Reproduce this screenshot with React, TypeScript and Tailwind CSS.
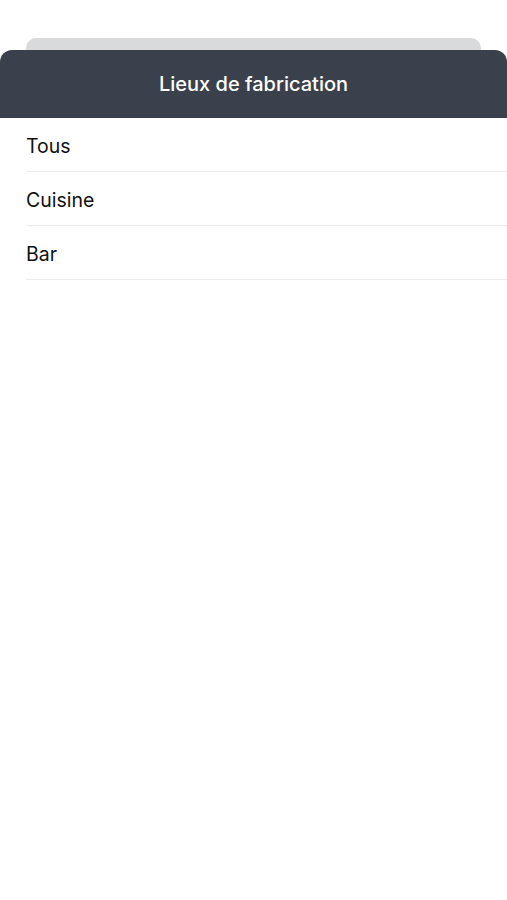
import React from 'react';

const PLACES = ['Tous', 'Cuisine', 'Bar'];

const App: React.FC = () => {
  return (
    <div className="min-h-screen bg-white pt-[38px]" style={{ fontFamily: 'Inter, "Noto Sans", sans-serif' }}>
      {/* stacked card behind the sheet */}
      <div className="mx-[26px] h-[12px] rounded-t-[10px] bg-[#d9dadb]" />

      <div className="flex h-[68px] items-center justify-center rounded-t-[12px] bg-[#3b414c]">
        <h1 className="text-[20px] font-medium text-white">Lieux de fabrication</h1>
      </div>

      <ul className="pl-[26px]">
        {PLACES.map((p) => (
          <li key={p} className="flex h-[54px] items-center border-b border-[#ebebeb] pt-[5px] text-[19.5px] text-[#111]">
            {p}
          </li>
        ))}
      </ul>
    </div>
  );
};

export default App;
